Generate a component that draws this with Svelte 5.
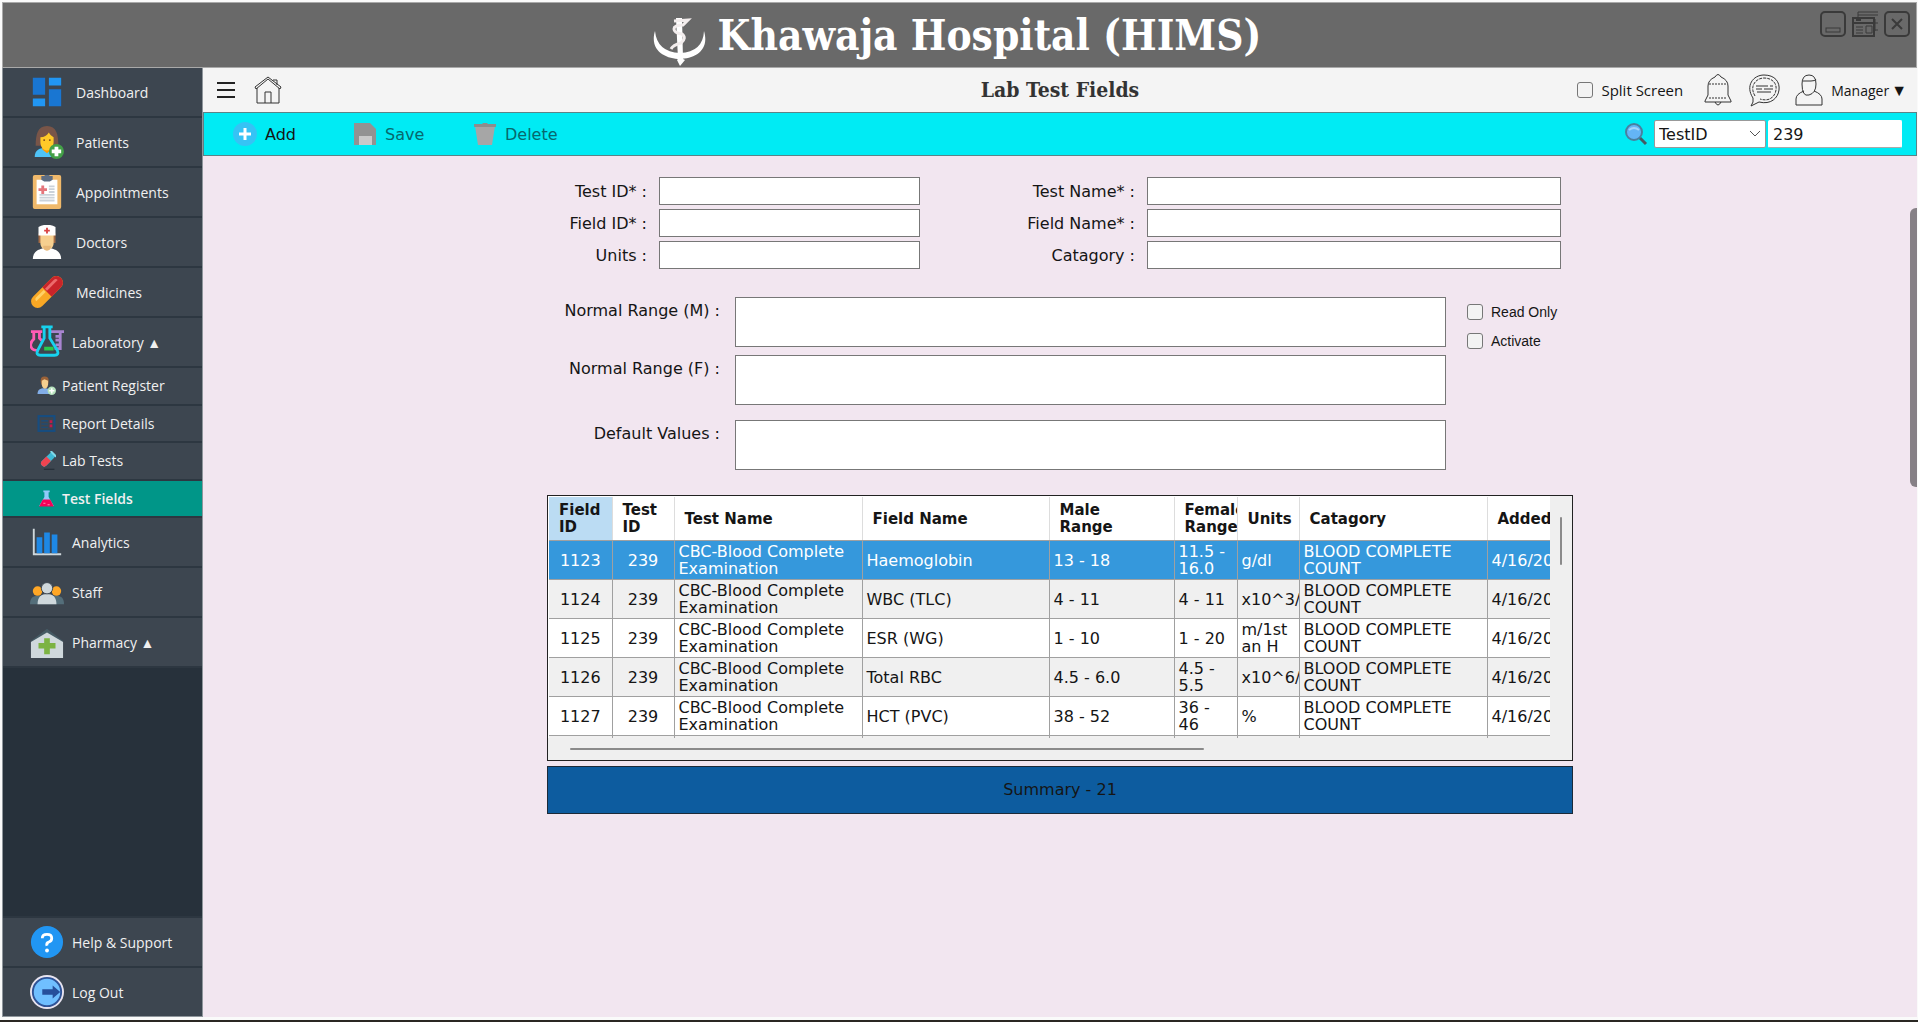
<script lang="ts">
  const menu = [
    { label: "Dashboard", icon: "dashboard" },
    { label: "Patients", icon: "patient" },
    { label: "Appointments", icon: "clipboard" },
    { label: "Doctors", icon: "doctor" },
    { label: "Medicines", icon: "pill" },
  ];

  const labMenu = [
    { label: "Patient Register", icon: "register" },
    { label: "Report Details", icon: "report" },
    { label: "Lab Tests", icon: "tube" },
    { label: "Test Fields", icon: "flask" },
  ];

  const moreMenu = [
    { label: "Analytics", icon: "chart" },
    { label: "Staff", icon: "staff" },
    { label: "Pharmacy ▲", icon: "pharmacy" },
  ];

  const footMenu = [
    { label: "Help & Support", icon: "help" },
    { label: "Log Out", icon: "logout" },
  ];

  const fields = [
    { id: "test-id", label: "Test ID* :" },
    { id: "test-name", label: "Test Name* :" },
    { id: "field-id", label: "Field ID* :" },
    { id: "field-name", label: "Field Name* :" },
    { id: "units", label: "Units :" },
    { id: "catagory", label: "Catagory :" },
  ];

  const columns = [
    { label: "Field ID", width: 63 },
    { label: "Test ID", width: 62 },
    { label: "Test Name", width: 188 },
    { label: "Field Name", width: 187 },
    { label: "Male Range", width: 125 },
    { label: "Female Range", width: 63 },
    { label: "Units", width: 62 },
    { label: "Catagory", width: 188 },
    { label: "Added", width: 188 },
  ];

  const testName = "CBC-Blood Complete Examination";
  const group = "BLOOD COMPLETE COUNT";

  const rows = [
    [1123, 239, testName, "Haemoglobin", "13 - 18", "11.5 - 16.0", "g/dl", group, "4/16/20"],
    [1124, 239, testName, "WBC (TLC)", "4 - 11", "4 - 11", "x10^3/", group, "4/16/20"],
    [1125, 239, testName, "ESR (WG)", "1 - 10", "1 - 20", "m/1st an H", group, "4/16/20"],
    [1126, 239, testName, "Total RBC", "4.5 - 6.0", "4.5 - 5.5", "x10^6/", group, "4/16/20"],
    [1127, 239, testName, "HCT (PVC)", "38 - 52", "36 - 46", "%", group, "4/16/20"],
  ];

  let activePage = $state("Test Fields");
  let labOpen = $state(true);
  let selected = $state(1123);
  let searchBy = $state("TestID");
  let query = $state("239");
</script>

{#snippet icon(name: string)}
  <svg class="icon" viewBox="0 0 36 36" aria-hidden="true">
    {#if name === "dashboard"}
      <path d="M3 3h13v18H3zM20 15h13v18H20z" fill="#1976d2" />
      <path d="M20 3h13v8H20zM3 25h13v8H3z" fill="#2196f3" />
    {:else if name === "patient"}
      <path d="M6 22c0-12 2-21 12-21s12 9 12 21z" fill="#795548" />
      <path d="M5 34c0-8 5-10 13-10s12 3 12 10z" fill="#4fc3f7" />
      <path d="M13 22h10v4l-5 4-5-4z" fill="#ff9800" />
      <path d="M11 13c4 0 7-2 9-5 1 2 3 4 5 5v5c0 5-3 9-7 9s-7-4-7-9z" fill="#ffca28" />
      <circle cx="15" cy="16" r="1" fill="#784719" />
      <circle cx="21" cy="16" r="1" fill="#784719" />
      <circle cx="28" cy="28" r="8" fill="#43a047" />
      <path d="M26 23h4v3h3v4h-3v3h-4v-3h-3v-4h3z" fill="#fff" />
    {:else if name === "clipboard"}
      <rect x="3" y="0" width="30" height="36" rx="2" fill="#f0b96b" />
      <path d="M7 5h22v26H7z" fill="#fff" />
      <path d="M12 1h3c1-2 5-2 6 0h3v4l-3 2h-6l-3-2z" fill="#5d6d83" />
      <path d="M12 11h3v3h3v3h-3v3h-3v-3H9v-3h3z" fill="#e5757c" />
      <path d="M20 12h6M20 15h6M20 18h6M10 21h16M10 24h16M10 27h16" stroke="#cbd2da" stroke-width="2" />
    {:else if name === "doctor"}
      <path d="M9 9h18v10H9z" fill="#a56a43" />
      <path d="M11 9h14v10c0 4-3 8-7 8s-7-4-7-8z" fill="#f6cf8f" />
      <path d="M14 22h8v7h-8z" fill="#e8b878" />
      <path d="M3 36c0-6 4-10 11-11 2 3 6 3 8 0 7 1 11 5 11 11z" fill="#fff" />
      <path d="M9 2c5-3 13-3 18 0v9H9z" fill="#fff" />
      <path d="M17 3h2v2h2v2h-2v2h-2V7h-2V5h2z" fill="#d94646" />
    {:else if name === "pill"}
      <g transform="rotate(45 18 18)">
        <rect x="11" y="-3" width="14" height="42" rx="7" fill="#f9a825" />
        <path d="M11 18V4a7 7 0 0 1 14 0v14z" fill="#c9242a" />
        <path d="M14 17V4q0-3 3-3v16z" fill="#ec6c6c" />
        <path d="M14 19h3v14q-3 0-3-3z" fill="#ffd166" />
      </g>
    {:else if name === "lab"}
      <g fill="none" stroke-width="3">
        <path d="M1 7h12M4 7v8c-5 4-5 12 5 12M10 7v7l3 3" stroke="#ff5bb5" />
        <path d="M20 7h16M32 7v18h-6M27 12h5M27 16h5M27 21h5" stroke="#a884d0" />
        <path d="M12 2h12M15 2v12L8 27q-2 5 3 5h15q5 0 3-5l-8-13V2" stroke="#17d2ee" />
      </g>
      <path d="M15 23h10v4H15z" fill="#2bc94b" />
    {:else if name === "register"}
      <path d="M1 34c0-8 5-11 13-11s13 3 13 11z" fill="#82aee8" />
      <rect x="7" y="1" width="15" height="17" rx="7" fill="#9b6238" />
      <path d="M9 9l5-3 7 3v7q-1 7-6 8-5-1-6-8z" fill="#f6cf8f" />
      <circle cx="28" cy="28" r="8" fill="#b6e2bd" />
      <path d="M28 23v10M23 28h10" stroke="#fff" stroke-width="3" />
    {:else if name === "report"}
      <rect x="3" y="4" width="30" height="28" fill="none" stroke="#174d80" stroke-width="4" />
      <path d="M8 13h13M8 19h13M8 25h13" stroke="#174d80" stroke-width="2" />
      <path d="M24 12h5v5h-5zM24 20h5v5h-5z" fill="#c2184c" />
    {:else if name === "tube"}
      <g transform="rotate(45 20 17)">
        <rect x="14" y="0" width="12" height="32" rx="6" fill="#3fb9d4" />
        <path d="M14 14h12v12a6 6 0 0 1-12 0z" fill="#ef4450" />
        <rect x="12" y="-1" width="16" height="4" rx="2" fill="#7fd8e8" />
      </g>
      <path d="M13 35h20" stroke="#27303a" stroke-width="3" />
    {:else if name === "flask"}
      <path d="M12 3h12v3h-2v9l10 17H4l10-17V6h-2z" fill="#90caf9" />
      <path d="M11 20h14l7 13H4z" fill="#f50057" />
      <path d="M12 27h4M20 30h4" stroke="#ff8ab3" stroke-width="2" />
    {:else if name === "chart"}
      <path d="M4 4v27h29" fill="none" stroke="#cfd8dc" stroke-width="2" />
      <path d="M7 13h6v17H7zM15 8h6v22h-6zM23 10h6v20h-6z" fill="#1e88e5" />
    {:else if name === "staff"}
      <path d="M0 31c0-7 3-9 9-9h18c6 0 9 2 9 9z" fill="#546e7a" />
      <circle cx="8" cy="17" r="5" fill="#ffa726" />
      <circle cx="28" cy="17" r="5" fill="#ffa726" />
      <path d="M8 31c0-8 4-11 10-11s10 3 10 11z" fill="#cfd8dc" />
      <circle cx="18" cy="14" r="6" fill="#cfd8dc" stroke="#3d4650" />
    {:else if name === "pharmacy"}
      <path d="M1 17L18 4l17 13-1 3H2z" fill="#455a64" />
      <path d="M1 18L18 8l17 10v17H1z" fill="#cfd8dc" />
      <path d="M15 14h6v5h6v6h-6v6h-6v-6H9v-6h6z" fill="#7cb342" />
    {:else if name === "help"}
      <circle cx="18" cy="18" r="17" fill="#2196f3" />
      <path d="M13 14q0-4 5-4t5 4q0 3-3 4t-2 4" fill="none" stroke="#fff" stroke-width="3" />
      <circle cx="18" cy="27" r="2" fill="#fff" />
    {:else if name === "logout"}
      <circle cx="18" cy="18" r="18" fill="#e8e4f0" />
      <circle cx="18" cy="18" r="15" fill="#70bfff" stroke="#2f5397" stroke-width="2" />
      <path d="M13 15h11v-4l8 7-8 7v-4H13z" fill="#264f9b" />
    {/if}
  </svg>
{/snippet}

{#snippet navLink(item: { label: string; icon: string })}
  <li>
    <a href="#{item.icon}" onclick={() => (activePage = item.label)}>
      {@render icon(item.icon)}
      <span>{item.label}</span>
    </a>
  </li>
{/snippet}

<div class="app">
  <header class="titlebar">
    <svg class="logo" viewBox="0 0 56 50" aria-hidden="true">
      <path d="M3 14C-3 34 14 42 28 42S58 34 52 14q-1 21-24 22Q5 35 3 14z" fill="#fff" />
      <path d="M24 1h6l1 41 2 1-5 6-3-6 1-1z" fill="#fff" />
      <path d="M22 4l14-1-5 5q-9 0-9 4t8 5q5 4-1 9-8 2-10 6" fill="none" stroke="#f3eded" stroke-width="3" />
    </svg>
    <h1>Khawaja Hospital (HIMS)</h1>
    <div class="controls">
      <button type="button" aria-label="Minimize">
        <svg viewBox="0 0 26 26"><rect x="1" y="1" width="24" height="24" rx="4" /><rect x="6" y="17" width="14" height="4" stroke-width="1" /></svg>
      </button>
      <button type="button" aria-label="Restore">
        <svg viewBox="0 0 26 26"><path d="M6 7V1h20M6 4h20M23 8v12M26 12h-4M26 19h-4" stroke-width="1" /><path d="M1 7h21v18H1zM1 12h21M4 9h5" /><path d="M4 16h7M4 19h7M4 22h7M14 15h6v7h-6z" stroke-width="1" /></svg>
      </button>
      <button type="button" aria-label="Close">
        <svg viewBox="0 0 26 26"><rect x="1" y="1" width="24" height="24" rx="4" /><path d="M8 8l10 10M18 8L8 18" /></svg>
      </button>
    </div>
  </header>

  <div class="body">
    <nav class="sidebar">
      <ul>
        {#each menu as item}
          {@render navLink(item)}
        {/each}
      </ul>
      <ul class="tight">
        <li>
          <a href="#lab" onclick={() => (labOpen = !labOpen)}>
            {@render icon("lab")}
            <span>Laboratory ▲</span>
          </a>
        </li>
      </ul>
      {#if labOpen}
        <ul class="submenu">
          {#each labMenu as item}
            <li class:active={activePage === item.label}>
              <a href="#{item.icon}" onclick={() => (activePage = item.label)}>
                {@render icon(item.icon)}
                <span>{item.label}</span>
              </a>
            </li>
          {/each}
        </ul>
      {/if}
      <ul class="tight">
        {#each moreMenu as item}
          {@render navLink(item)}
        {/each}
      </ul>
      <ul class="tight foot">
        {#each footMenu as item}
          {@render navLink(item)}
        {/each}
      </ul>
    </nav>

    <div class="page">
      <div class="topbar">
        <div class="left">
          <button type="button" aria-label="Toggle menu">
            <svg viewBox="0 0 20 20" width="20" height="20" stroke="#222" stroke-width="2">
              <path d="M1 3h18M1 10h18M1 17h18" />
            </svg>
          </button>
          <button type="button" aria-label="Home">
            <svg viewBox="0 0 28 28" width="28" height="28" fill="none" stroke="#333">
              <path d="M1 11L14 1l13 10-1 2L14 3 2 13z" />
              <path d="M3 12v15h22V12M11 27V16h6v11M19 4h4v5" />
            </svg>
          </button>
        </div>
        <h2>Lab Test Fields</h2>
        <div class="right">
          <label class="split"><input type="checkbox" />Split Screen</label>
          <button type="button" aria-label="Notifications">
            <svg viewBox="0 0 30 34" width="30" height="34" fill="none" stroke="#333">
              <path d="M12 4q3-5 6 0 7 3 7 9v9l3 6v1H2v-1l3-6v-9q0-6 7-9zM12 29q3 6 6 0" />
              <path d="M6 11h18M6 25h18" stroke-dasharray="2 1" />
            </svg>
          </button>
          <button type="button" aria-label="Messages">
            <svg viewBox="0 0 34 34" width="34" height="34" fill="none" stroke="#333">
              <path d="M6 25C-2 13 6 2 17 2s16 7 15 15-8 15-20 12l-8 4q3-4 2-8z" />
              <path d="M8 23C2 13 9 5 17 5s13 5 12 12-7 12-16 9" stroke-dasharray="3 1" />
              <path d="M9 13h12M23 13h3M9 16h6M17 16h9M10 19h14" />
            </svg>
          </button>
          <button type="button" class="user">
            <svg viewBox="0 0 28 32" width="28" height="32" fill="none" stroke="#333">
              <path d="M7 10q0-9 7-9t7 9-7 11-7-11zM8 7h8q5 0 5-2" />
              <path d="M9 17q-8 3-8 8v6h26v-6q0-5-8-8" />
            </svg>
            <span>Manager</span><span class="caret">▼</span>
          </button>
        </div>
      </div>

      <div class="toolbar">
        <button type="button" class="tool">
          <svg viewBox="0 0 26 26" width="26" height="26">
            <circle cx="13" cy="13" r="12" fill="#36c3f5" />
            <path d="M13 7v12M7 13h12" stroke="#fff" stroke-width="3" />
          </svg>
          Add
        </button>
        <button type="button" class="tool" disabled>
          <svg viewBox="0 0 26 26" width="26" height="26">
            <path d="M2 2h16l6 6v16H2z" fill="#929292" />
            <path d="M7 15h13v9H7z" fill="#c9c9c9" />
          </svg>
          Save
        </button>
        <button type="button" class="tool" disabled>
          <svg viewBox="0 0 26 26" width="26" height="26">
            <path d="M3 5h20l-3 19H6z" fill="#a6a6a6" />
            <path d="M2 3h8l1-1h4l1 1h8v3H2z" fill="#8d8d8d" />
          </svg>
          Delete
        </button>
        <form class="search">
          <svg viewBox="0 0 24 24" width="24" height="24" aria-hidden="true">
            <path d="M15 15l7 7" stroke="#455a64" stroke-width="3" />
            <circle cx="10" cy="10" r="8" fill="#64b5f6" stroke="#4a7f9f" stroke-width="2" />
            <path d="M5 8q5-4 10 0" fill="none" stroke="#a5d4fb" stroke-width="2" />
          </svg>
          <div class="select">
            <select aria-label="Search by" bind:value={searchBy}>
              <option>TestID</option>
            </select>
            <svg viewBox="0 0 12 8" width="12" height="8" fill="none" stroke="#555"><path d="M1 1l5 5 5-5" /></svg>
          </div>
          <input type="text" aria-label="Search value" bind:value={query} />
        </form>
      </div>

      <main>
        <div class="content">
          <div class="fields">
            {#each fields as field}
              <label for={field.id}>{field.label}</label>
              <input type="text" id={field.id} />
            {/each}
          </div>

          <div class="ranges">
            <label for="range-m">Normal Range (M) :</label>
            <textarea id="range-m"></textarea>
            <div class="flags">
              <label><input type="checkbox" />Read Only</label>
              <label><input type="checkbox" />Activate</label>
            </div>
            <label for="range-f">Normal Range (F) :</label>
            <textarea id="range-f"></textarea>
            <label for="defaults">Default Values :</label>
            <textarea id="defaults"></textarea>
          </div>

          <div class="grid">
            <div class="viewport">
              <table>
                <colgroup>
                  {#each columns as column}
                    <col style="width: {column.width}px" />
                  {/each}
                </colgroup>
                <thead>
                  <tr>
                    {#each columns as column}
                      <th>{column.label}</th>
                    {/each}
                  </tr>
                </thead>
                <tbody>
                  {#each rows as row}
                    <tr class:selected={row[0] === selected} onclick={() => (selected = Number(row[0]))}>
                      {#each row as cell}
                        <td>{cell}</td>
                      {/each}
                    </tr>
                  {/each}
                  <tr>
                    {#each columns as _}
                      <td></td>
                    {/each}
                  </tr>
                </tbody>
              </table>
            </div>
            <div class="track-y"><div class="thumb"></div></div>
            <div class="track-x"><div class="thumb"></div></div>
          </div>

          <div class="summary">Summary - 21</div>
        </div>
        <div class="drawer"></div>
      </main>
    </div>
  </div>
</div>

<style>
  :global(body) {
    margin: 0;
    background: #fafafa;
  }

  .app {
    display: flex;
    flex-direction: column;
    box-sizing: border-box;
    min-height: 100vh;
    padding: 2px 1px 3px 2px;
    border-bottom: 2px solid #2a2723;
    font-family: "DejaVu Sans", Verdana, sans-serif;
    font-size: 16px;
    color: #151515;
  }

  button {
    display: flex;
    align-items: center;
    padding: 0;
    border: none;
    background: none;
    font: inherit;
    color: inherit;
  }

  ul {
    margin: 0;
    padding: 0;
    list-style: none;
  }

  .titlebar {
    display: flex;
    justify-content: center;
    align-items: center;
    gap: 10px;
    box-sizing: border-box;
    height: 66px;
    padding-right: 6px;
    border: 1px solid #a9a9a9;
    background: #696969;
    position: relative;
  }

  .titlebar h1 {
    margin: 2px 0 0;
    font-family: "DejaVu Serif Condensed", "DejaVu Serif", Georgia, serif;
    font-size: 42px;
    line-height: 48px;
    font-weight: bold;
    color: #fff;
  }

  .logo {
    width: 56px;
    height: 50px;
    align-self: flex-end;
  }

  .controls {
    position: absolute;
    top: 8px;
    right: 6px;
    display: flex;
    gap: 6px;
  }

  .controls svg {
    width: 26px;
    height: 26px;
    fill: none;
    stroke: #3a3a3a;
    stroke-width: 2;
  }

  .body {
    flex: 1;
    display: flex;
  }

  .sidebar {
    flex: none;
    display: flex;
    flex-direction: column;
    box-sizing: border-box;
    width: 201px;
    border: 1px solid #8f969c;
    border-top: none;
    background: #27313b;
    font-family: "Open Sans", "Segoe UI", sans-serif;
    font-size: 14px;
  }

  .sidebar li {
    box-sizing: border-box;
    height: 50px;
    border-bottom: 2px solid #2d3741;
    background: #3d4650;
  }

  .sidebar a {
    display: flex;
    align-items: center;
    gap: 12px;
    height: 100%;
    padding-left: 27px;
    color: #f0f0f0;
    text-decoration: none;
  }

  .sidebar .icon {
    width: 34px;
    height: 34px;
  }

  .sidebar .tight a {
    gap: 8px;
  }

  .submenu {
    display: grid;
    grid-template-rows: repeat(4, 1fr);
    height: 150px;
  }

  .sidebar .submenu li {
    height: auto;
  }

  .sidebar .submenu a {
    gap: 6px;
    padding-left: 34px;
  }

  .sidebar .submenu .icon {
    width: 19px;
    height: 19px;
  }

  .sidebar .submenu .active {
    background: #009688;
    font-weight: 600;
  }

  .sidebar .foot {
    margin-top: auto;
  }

  .sidebar .foot li {
    border-top: 2px solid #2d3741;
    border-bottom: none;
  }

  .page {
    flex: 1;
    display: flex;
    flex-direction: column;
    min-width: 0;
  }

  .topbar {
    display: grid;
    grid-template-columns: 1fr auto 1fr;
    align-items: center;
    height: 44px;
    background: #f4f4f4;
  }

  .topbar h2 {
    margin: 0;
    font-family: "DejaVu Serif Condensed", "DejaVu Serif", Georgia, serif;
    font-size: 21px;
    line-height: 24px;
    color: #333;
  }

  .left,
  .right {
    display: flex;
    align-items: center;
    gap: 18px;
    padding-left: 13px;
  }

  .right {
    justify-content: flex-end;
    gap: 14px;
    padding-right: 10px;
  }

  .split {
    display: flex;
    align-items: center;
    gap: 8px;
    margin-right: 6px;
    font-family: "Open Sans", "Segoe UI", sans-serif;
    font-size: 15px;
  }

  input[type="checkbox"] {
    appearance: none;
    box-sizing: border-box;
    flex: none;
    width: 16px;
    height: 16px;
    margin: 0;
    border: 1px solid #777;
    border-radius: 3px;
    background: #f3f3f3;
  }

  .user {
    gap: 8px;
    font-family: "Open Sans", "Segoe UI", sans-serif;
    font-size: 14px;
    font-weight: 500;
  }

  .caret {
    margin-left: -6px;
    font-size: 16px;
  }

  .toolbar {
    display: flex;
    align-items: center;
    box-sizing: border-box;
    height: 44px;
    padding: 0 14px 0 28px;
    border: 1px solid #5b8387;
    background: #00ebf4;
  }

  .tool {
    gap: 7px;
    min-width: 120px;
  }

  .tool:disabled {
    color: #07686d;
  }

  .search {
    display: flex;
    align-items: center;
    gap: 2px;
    margin-left: auto;
  }

  .search .select {
    display: grid;
    align-items: center;
    margin-left: 4px;
  }

  .select select,
  .select svg {
    grid-area: 1 / 1;
  }

  .select svg {
    justify-self: end;
    margin-right: 5px;
    pointer-events: none;
  }

  .search select,
  .search input {
    appearance: none;
    box-sizing: border-box;
    height: 28px;
    padding: 0 4px;
    border: 1px solid #999;
    border-radius: 2px;
    background: #fff;
    font: inherit;
    color: inherit;
  }

  .search select {
    width: 112px;
  }

  .search input {
    width: 134px;
    border-color: #fff #fff #aaa;
  }

  main {
    flex: 1;
    padding: 21px 24px;
    background: #f2e6f0;
    position: relative;
  }

  .content {
    max-width: 1026px;
    margin: 0 auto;
  }

  .fields {
    display: grid;
    grid-template-columns: 112px 261px 1fr 414px;
    gap: 4px 0;
    align-items: center;
    padding-right: 12px;
  }

  .fields label,
  .ranges > label {
    padding-right: 12px;
    text-align: right;
  }

  .fields input,
  textarea {
    box-sizing: border-box;
    width: 100%;
    height: 28px;
    padding: 2px 4px;
    border: 1px solid #777;
    background: #fff;
    font: inherit;
    resize: none;
  }

  .ranges {
    display: grid;
    grid-template-columns: 188px 1fr 106px;
    grid-template-rows: 58px 65px 50px;
    margin-top: 28px;
    padding-right: 21px;
  }

  .ranges > label {
    grid-column: 1;
    padding-right: 15px;
    line-height: 28px;
  }

  .ranges textarea {
    display: block;
    height: 50px;
  }

  .flags {
    display: flex;
    flex-direction: column;
    gap: 13px;
    padding: 7px 0 0 21px;
  }

  .flags label {
    display: flex;
    align-items: center;
    gap: 8px;
    font-family: "Liberation Sans", Arial, sans-serif;
    font-size: 14px;
    line-height: 16px;
    white-space: nowrap;
  }

  .grid {
    display: grid;
    grid-template-columns: 1fr 22px;
    grid-template-rows: 242px 22px;
    margin-top: 25px;
    border: 1px solid #222;
    background: #efefef;
  }

  .viewport {
    overflow: hidden;
    padding: 1px 0 0 1px;
    background: #fff;
  }

  table {
    width: 1126px;
    table-layout: fixed;
    border-collapse: collapse;
  }

  th,
  td {
    box-sizing: border-box;
    height: 39px;
    padding: 1px 4px 0;
    border-right: 1px solid #a0a0a0;
    border-bottom: 1px solid #a0a0a0;
    overflow: hidden;
    line-height: 17px;
    text-align: left;
  }

  th {
    height: 43px;
    padding: 2px 0 0 10px;
    border-right-color: #ddd;
    font-size: 15px;
  }

  th:nth-child(5) {
    padding-right: 24px;
  }

  th:first-child {
    background: #bbdcf3;
  }

  td:nth-child(-n + 2) {
    padding: 1px 0 0;
    text-align: center;
  }

  tbody tr:nth-child(even) {
    background: #f0f0f0;
  }

  tbody tr.selected {
    background: #3598dc;
    color: #fff;
  }

  .thumb {
    border-radius: 2px;
    background: #8a8a8a;
  }

  .track-y .thumb {
    width: 2px;
    height: 48px;
    margin: 21px 0 0 10px;
  }

  .track-x .thumb {
    width: 634px;
    height: 2px;
    margin: 10px 0 0 22px;
  }

  .summary {
    box-sizing: border-box;
    height: 48px;
    margin-top: 5px;
    border: 1px solid #1c2a38;
    background: #0d5c9f;
    line-height: 46px;
    text-align: center;
  }

  .drawer {
    position: absolute;
    top: 52px;
    right: 0;
    width: 7px;
    height: 279px;
    border-radius: 6px 0 0 6px;
    background: #868086;
  }
</style>
